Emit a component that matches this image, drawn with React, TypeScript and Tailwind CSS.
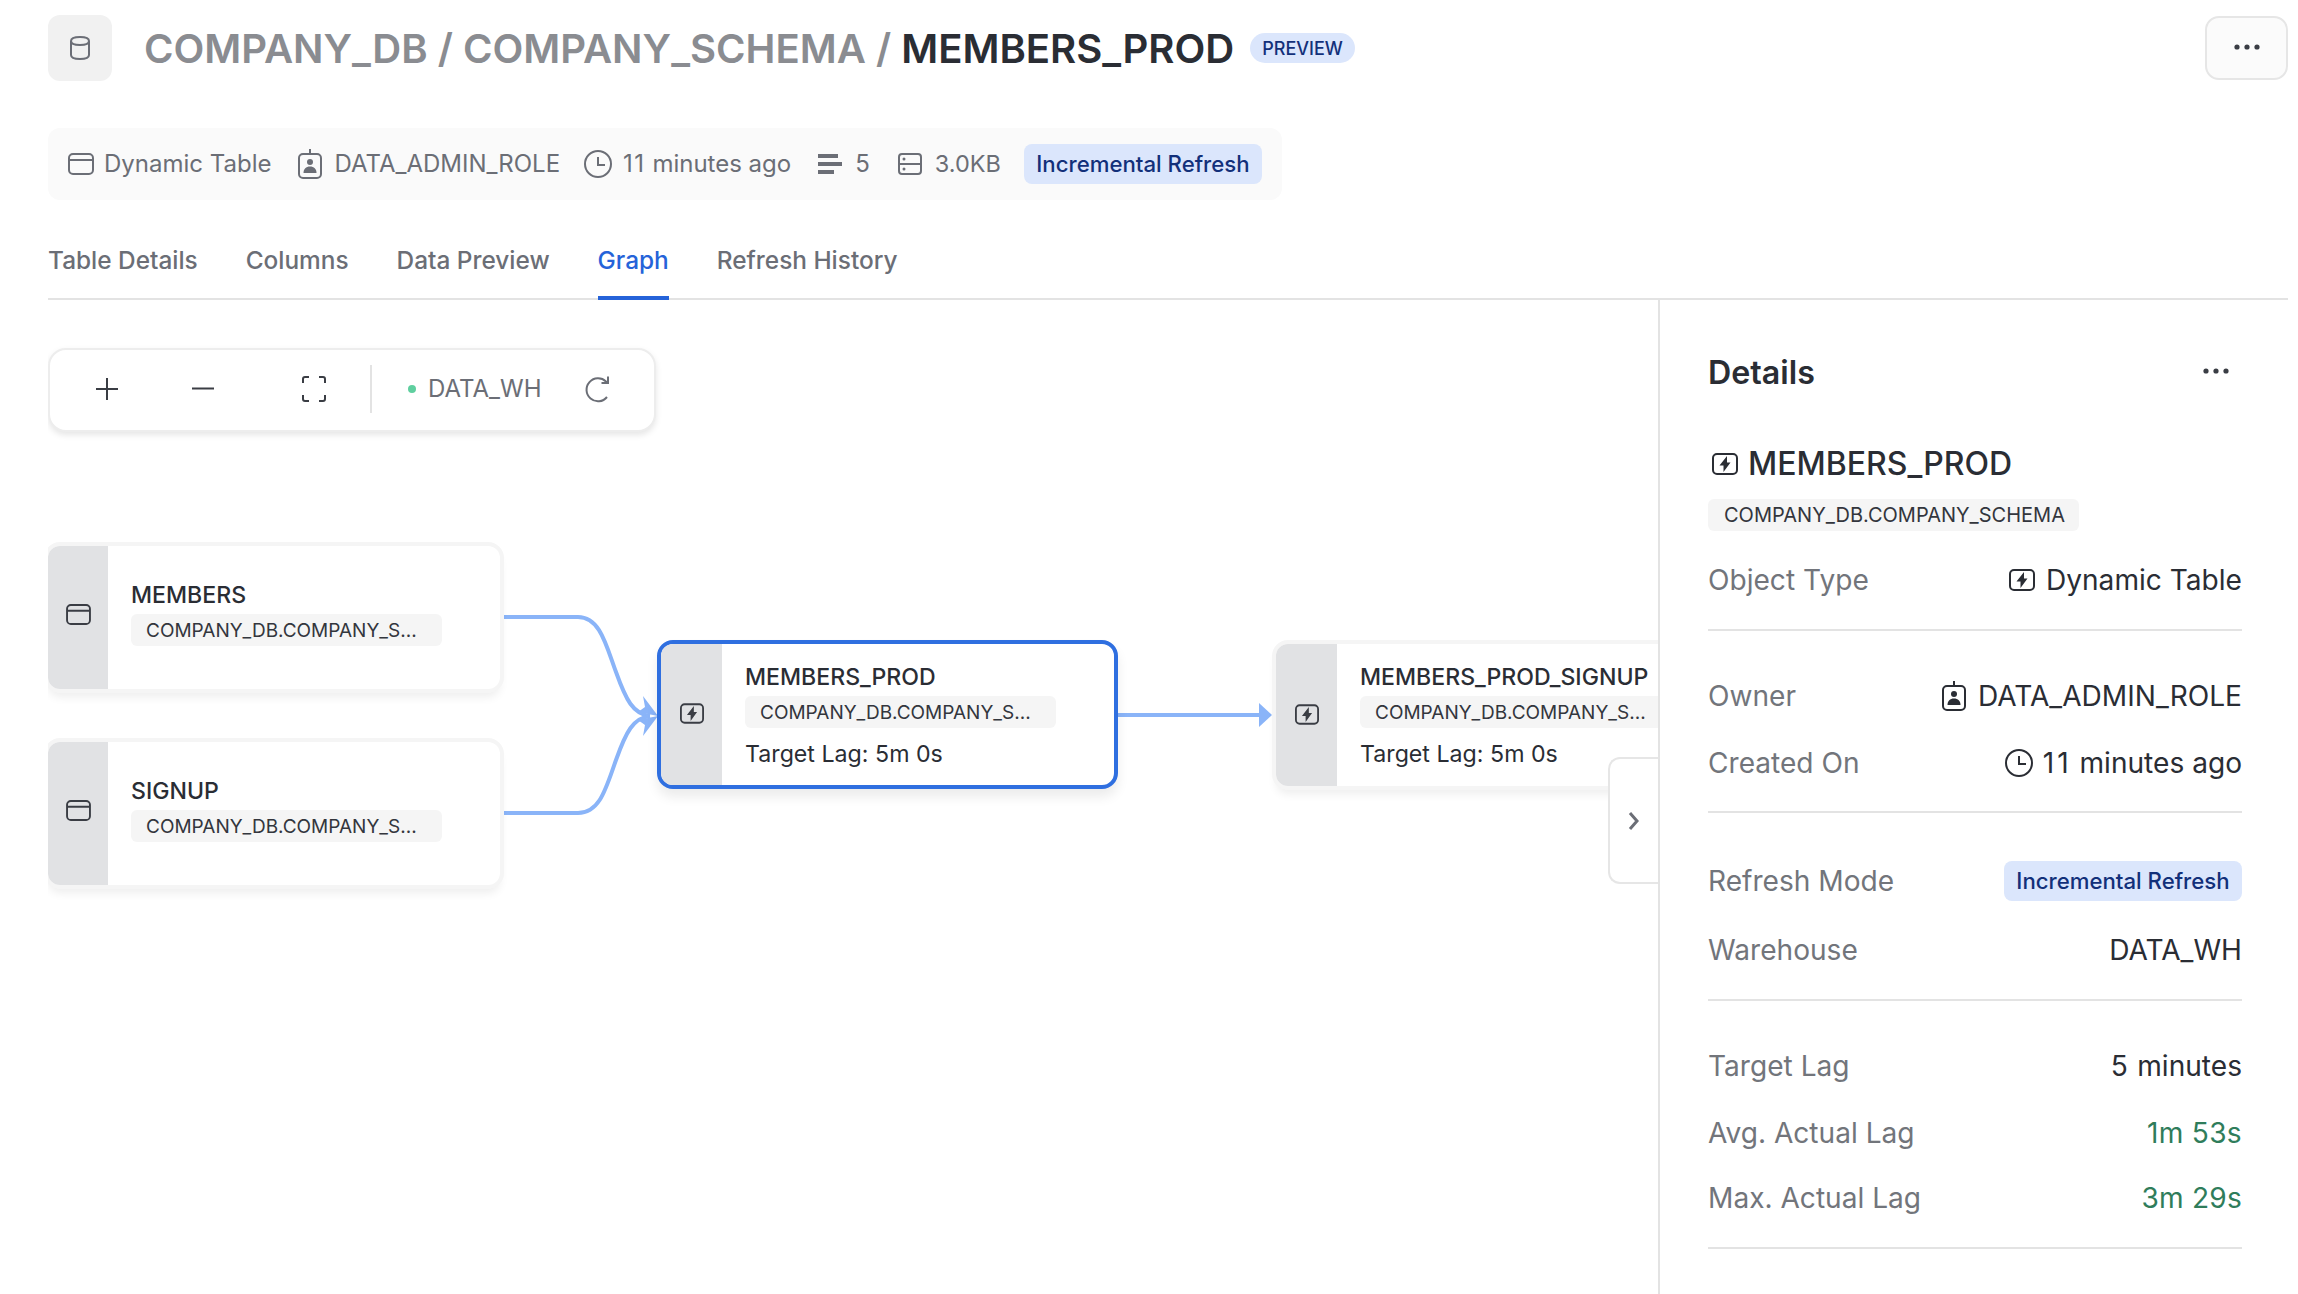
import React from "react";

const TableIcon = ({ className = "" }: { className?: string }) => (
  <svg viewBox="0 0 26 22" fill="none" stroke="currentColor" strokeWidth="2" className={className}>
    <rect x="1" y="1" width="24" height="20" rx="4" />
    <path d="M1 7h24" />
  </svg>
);
const BoltIcon = ({ className = "" }: { className?: string }) => (
  <svg viewBox="0 0 26 22" fill="none" className={className}>
    <rect x="1" y="1" width="24" height="20" rx="4" stroke="currentColor" strokeWidth="2" />
    <path d="M15 3 7.500 12.500h4v6.500l7-9.500h-3.500z" fill="currentColor" />
  </svg>
);
const RoleIcon = ({ className = "" }: { className?: string }) => (
  <svg viewBox="0 0 24 30" fill="none" className={className}>
    <path d="M12 0v6" stroke="currentColor" strokeWidth="2" />
    <rect x="1" y="5" width="22" height="24" rx="4" stroke="currentColor" strokeWidth="2" />
    <circle cx="12" cy="13" r="3" fill="currentColor" />
    <path d="M5.500 24c0-4 2.500-6.500 6.500-6.500s6.500 2.500 6.500 6.500z" fill="currentColor" />
  </svg>
);
const ClockIcon = ({ className = "" }: { className?: string }) => (
  <svg viewBox="0 0 28 28" fill="none" stroke="currentColor" strokeWidth="2" className={className}>
    <circle cx="14" cy="14" r="13" />
    <path d="M14 7v8h7" />
  </svg>
);
const RowsIcon = ({ className = "" }: { className?: string }) => (
  <svg viewBox="0 0 24 20" fill="currentColor" className={className}>
    <rect x="0" y="0" width="20" height="4" />
    <rect x="0" y="8" width="24" height="4" />
    <rect x="0" y="16" width="16" height="4" />
  </svg>
);
const SizeIcon = ({ className = "" }: { className?: string }) => (
  <svg viewBox="0 0 24 22" fill="none" className={className}>
    <rect x="1" y="1" width="22" height="20" rx="3" stroke="currentColor" strokeWidth="2" />
    <path d="M1 11h22" stroke="currentColor" strokeWidth="2" />
    <circle cx="6" cy="6" r="1.500" fill="currentColor" />
    <circle cx="6" cy="16" r="1.500" fill="currentColor" />
  </svg>
);
const DbIcon = ({ className = "" }: { className?: string }) => (
  <svg viewBox="0 0 20 24" fill="none" stroke="currentColor" strokeWidth="2" className={className}>
    <path d="M1 5c0-2.500 4-4 9-4s9 1.500 9 4v14c0 2.500-4 4-9 4s-9-1.500-9-4z" />
    <path d="M1 5c0 2.500 4 4 9 4s9-1.500 9-4" />
  </svg>
);
const Dots = ({ className = "" }: { className?: string }) => (
  <svg viewBox="0 0 26 6" fill="currentColor" className={className}>
    <circle cx="3" cy="3" r="2.600" />
    <circle cx="13" cy="3" r="2.600" />
    <circle cx="23" cy="3" r="2.600" />
  </svg>
);

const Pill = ({ children }: { children: React.ReactNode }) => (
  <div className="mt-[4px] flex h-[32px] w-[311px] items-center rounded-md bg-[#f5f5f5] pl-[15px] text-[19px] leading-none text-[#33363d] whitespace-nowrap">
    {children}
  </div>
);

const GraphNode = ({
  name,
  lag,
  bolt,
  selected,
  className,
}: {
  name: string;
  lag?: boolean;
  bolt?: boolean;
  selected?: boolean;
  className: string;
}) => (
  <div
    className={`absolute flex overflow-hidden bg-white ${className} ${
      selected
        ? "rounded-2xl border-4 border-[#2f6fe0] shadow-[0_8px_12px_rgba(0,0,0,0.08)]"
        : "rounded-xl shadow-[0_0_0_4px_#f5f5f5,0_8px_10px_rgba(0,0,0,0.07)]"
    }`}
  >
    <div className={`flex shrink-0 items-center justify-center bg-[#e1e2e4] text-[#3a3d44] ${bolt ? "w-[61px] pb-[2px]" : "w-[60px] pb-[7px]"}`}>
      {bolt ? <BoltIcon className="h-[21px] w-[24px]" /> : <TableIcon className="h-[21px] w-[25px]" />}
    </div>
    <div className={`pl-[23px] ${lag ? "pt-[18px]" : "pt-[34px]"}`}>
      <div className="h-[30px] text-[23.1px] font-medium leading-[30px] text-[#2a2d34] whitespace-nowrap">{name}</div>
      <Pill>COMPANY_DB.COMPANY_S...</Pill>
      {lag && <div className="mt-[11px] text-[23.2px] leading-[30px] text-[#2a2d34] whitespace-nowrap">Target Lag: 5m 0s</div>}
    </div>
  </div>
);

const Row = ({ label, mt, children }: { label: string; mt: string; children: React.ReactNode }) => (
  <div className={`flex h-[40px] items-center justify-between text-[28.1px] leading-[40px] ${mt}`}>
    <span className="text-[#72757b]">{label}</span>
    <span className="flex items-center text-[#2a2d34]">{children}</span>
  </div>
);

const Divider = ({ mt }: { mt: string }) => <div className={`h-[2px] bg-[#e3e3e3] ${mt}`} />;

export default function App() {
  return (
    <div className="h-[1294px] w-[2298px] overflow-hidden bg-white pl-[48px] pr-[10px] pt-[15px] font-['Inter',sans-serif]">
      {/* Header */}
      <div className="flex h-[66px] items-center">
        <div className="flex h-[66px] w-[64px] items-center justify-center rounded-xl bg-[#f1f1f1] text-[#6b6e76]">
          <DbIcon className="h-[24px] w-[20px]" />
        </div>
        <h1 className="ml-[32px] pt-[1px] text-[40.1px] font-semibold leading-[66px] text-[#8a8c91] whitespace-nowrap">
          COMPANY_DB / COMPANY_SCHEMA / <span className="text-[#2a2d34]">MEMBERS_PROD</span>
        </h1>
        <span className="ml-[16px] flex h-[30px] items-center rounded-full bg-[#dbe6fc] px-[12px] text-[18px] font-medium text-[#12307a]">
          PREVIEW
        </span>
        <button className="ml-auto flex h-[64px] w-[83px] items-center justify-center rounded-[14px] border-2 border-[#e6e6e6] bg-[#fbfbfb] text-[#3a3d44]">
          <Dots className="-mt-[2px] h-[6px] w-[26px]" />
        </button>
      </div>

      {/* Meta bar */}
      <div className="mt-[47px] flex h-[72px] w-[1234px] items-center rounded-xl bg-[#fafafa] pl-[20px] text-[24px] text-[#6b6e76] whitespace-nowrap">
        <TableIcon className="h-[22px] w-[26px]" />
        <span className="ml-[10px]">Dynamic Table</span>
        <RoleIcon className="ml-[27px] h-[30px] w-[24px]" />
        <span className="ml-[12px]">DATA_ADMIN_ROLE</span>
        <ClockIcon className="ml-[24px] h-[28px] w-[28px]" />
        <span className="ml-[11px]">
          <span className="tracking-[1.5px]">11</span> minutes ago
        </span>
        <RowsIcon className="ml-[27px] h-[20px] w-[24px]" />
        <span className="ml-[13px]">5</span>
        <SizeIcon className="ml-[28px] h-[22px] w-[24px]" />
        <span className="ml-[13px] text-[23.5px]">3.0KB</span>
        <span className="ml-[23px] flex h-[40px] w-[238px] items-center justify-center rounded-lg bg-[#dbe6fc] text-[22.2px] font-medium text-[#12307a]">
          Incremental Refresh
        </span>
      </div>

      {/* Tabs */}
      <div className="flex h-[100px] items-end gap-[48px] border-b-2 border-[#e3e3e3] text-[24.4px] font-medium leading-[36px] text-[#6b6e76]">
        <div className="-mb-[2px] border-b-4 border-transparent pb-[18px]">Table Details</div>
        <div className="-mb-[2px] border-b-4 border-transparent pb-[18px]">Columns</div>
        <div className="-mb-[2px] border-b-4 border-transparent pb-[18px]">Data Preview</div>
        <div className="-mb-[2px] border-b-4 border-[#2563d9] pb-[18px] text-[#2563d9]">Graph</div>
        <div className="-mb-[2px] border-b-4 border-transparent pb-[18px]">Refresh History</div>
      </div>

      <div className="flex h-[994px]">
        {/* Canvas */}
        <div className="relative h-full w-[1610px] overflow-hidden pt-[48px]">
          <div className="relative z-10 flex h-[84px] w-[608px] items-center rounded-[18px] border-2 border-[#ededed] bg-white pb-[2px] text-[#3a3d44] shadow-[0_3px_6px_rgba(0,0,0,0.1)]">
            <svg viewBox="0 0 24 24" fill="none" stroke="currentColor" strokeWidth="2" className="ml-[45px] h-[24px] w-[24px]">
              <path d="M12 1v22M1 12h22" />
            </svg>
            <svg viewBox="0 0 24 24" fill="none" stroke="currentColor" strokeWidth="2" className="ml-[72px] h-[24px] w-[24px]">
              <path d="M1 11.500h22" />
            </svg>
            <svg viewBox="0 0 24 26" fill="none" stroke="currentColor" strokeWidth="2" className="ml-[87px] h-[26px] w-[24px]">
              <path d="M7 1H3a2 2 0 0 0-2 2v4M17 1h4a2 2 0 0 1 2 2v4M7 25H3a2 2 0 0 1-2-2v-4M17 25h4a2 2 0 0 0 2-2v-4" />
            </svg>
            <div className="ml-[44px] h-[48px] w-[2px] bg-[#e3e3e3]" />
            <div className="ml-[36px] h-[8px] w-[8px] rounded-full bg-[#5fcf9f]" />
            <span className="ml-[12px] text-[24px] text-[#6b6e76]">DATA_WH</span>
            <svg viewBox="0 0 26 28" fill="none" stroke="#6b6e76" strokeWidth="2" className="ml-[43px] h-[28px] w-[26px]">
              <path d="M23 22a11.500 11.500 0 1 1-1-15.500L24 8M24 1.500V8h-6.500" />
            </svg>
          </div>

          <svg className="absolute left-0 top-0 h-[994px] w-[1610px]" viewBox="0 0 1610 994" fill="none" stroke="#8ab4f8" strokeWidth="4">
            <path d="M455 317H530C552 317 558 345 568 372C578 400 585 414 602 416" />
            <path d="M455 513H530C552 513 558 488 568 460C578 432 585 418 602 416" />
            <path d="M1069 415H1215" />
            <polygon points="610,416 590,412 597,407 595,396" fill="#8ab4f8" stroke="none" />
            <polygon points="610,416 590,420 597,425 595,436" fill="#8ab4f8" stroke="none" />
            <polygon points="1211,403 1224,415 1211,427" fill="#8ab4f8" stroke="none" />
          </svg>

          <GraphNode name="MEMBERS" className="left-0 top-[246px] h-[143px] w-[452px]" />
          <GraphNode name="SIGNUP" className="left-0 top-[442px] h-[143px] w-[452px]" />
          <GraphNode name="MEMBERS_PROD" bolt lag selected className="left-[609px] top-[340px] h-[149px] w-[461px]" />
          <GraphNode name="MEMBERS_PROD_SIGNUP" bolt lag className="left-[1228px] top-[344px] h-[142px] w-[459px]" />

          <button className="absolute right-0 top-[457px] z-10 flex h-[127px] w-[50px] items-center justify-center rounded-l-xl border-2 border-r-0 border-[#e6e6e6] bg-white text-[#6b6e76]">
            <svg viewBox="0 0 12 20" fill="none" stroke="currentColor" strokeWidth="3" className="h-[20px] w-[12px]">
              <path d="M2 2l7 8-7 8" />
            </svg>
          </button>
        </div>

        {/* Details panel */}
        <div className="h-full w-[630px] border-l-2 border-[#e3e3e3] pl-[48px] pr-[46px] pt-[50px]">
          <div className="flex h-[46px] items-center justify-between pr-[13px]">
            <span className="text-[32.2px] font-semibold text-[#2a2d34]">Details</span>
            <Dots className="-mt-[4px] h-[6px] w-[26px] text-[#3a3d44]" />
          </div>
          <div className="mt-[48px] flex h-[40px] items-center pl-[4px] text-[32px] font-medium text-[#2a2d34]">
            <BoltIcon className="h-[22px] w-[26px]" />
            <span className="ml-[10px]">MEMBERS_PROD</span>
          </div>
          <div className="mt-[15px] flex h-[32px] w-[371px] items-center rounded-md bg-[#f5f5f5] pl-[16px] text-[20px] text-[#33363d]">
            COMPANY_DB.COMPANY_SCHEMA
          </div>
          <Row label="Object Type" mt="mt-[29px]">
            <BoltIcon className="mr-[11px] h-[22px] w-[26px]" />
            Dynamic Table
          </Row>
          <Divider mt="mt-[29px]" />
          <Row label="Owner" mt="mt-[45px]">
            <RoleIcon className="mr-[12px] h-[30px] w-[24px]" />
            DATA_ADMIN_ROLE
          </Row>
          <Row label="Created On" mt="mt-[27px]">
            <ClockIcon className="mr-[10px] h-[28px] w-[28px]" />
            <span>
              <span className="tracking-[3px]">11</span> minutes ago
            </span>
          </Row>
          <Divider mt="mt-[28px]" />
          <Row label="Refresh Mode" mt="mt-[48px]">
            <span className="flex h-[40px] w-[238px] items-center justify-center rounded-lg bg-[#dbe6fc] text-[22.2px] font-medium text-[#12307a]">
              Incremental Refresh
            </span>
          </Row>
          <Row label="Warehouse" mt="mt-[29px]">DATA_WH</Row>
          <Divider mt="mt-[29px]" />
          <Row label="Target Lag" mt="mt-[45px]">
            <span>
              <span className="tracking-[1.5px]">5</span> minutes
            </span>
          </Row>
          <Row label="Avg. Actual Lag" mt="mt-[27px]">
            <span className="tracking-[0.3px] text-[#2f7d5b]">1m 53s</span>
          </Row>
          <Row label="Max. Actual Lag" mt="mt-[25px]">
            <span className="tracking-[0.2px] text-[#2f7d5b]">3m 29s</span>
          </Row>
          <Divider mt="mt-[29px]" />
        </div>
      </div>
    </div>
  );
}
